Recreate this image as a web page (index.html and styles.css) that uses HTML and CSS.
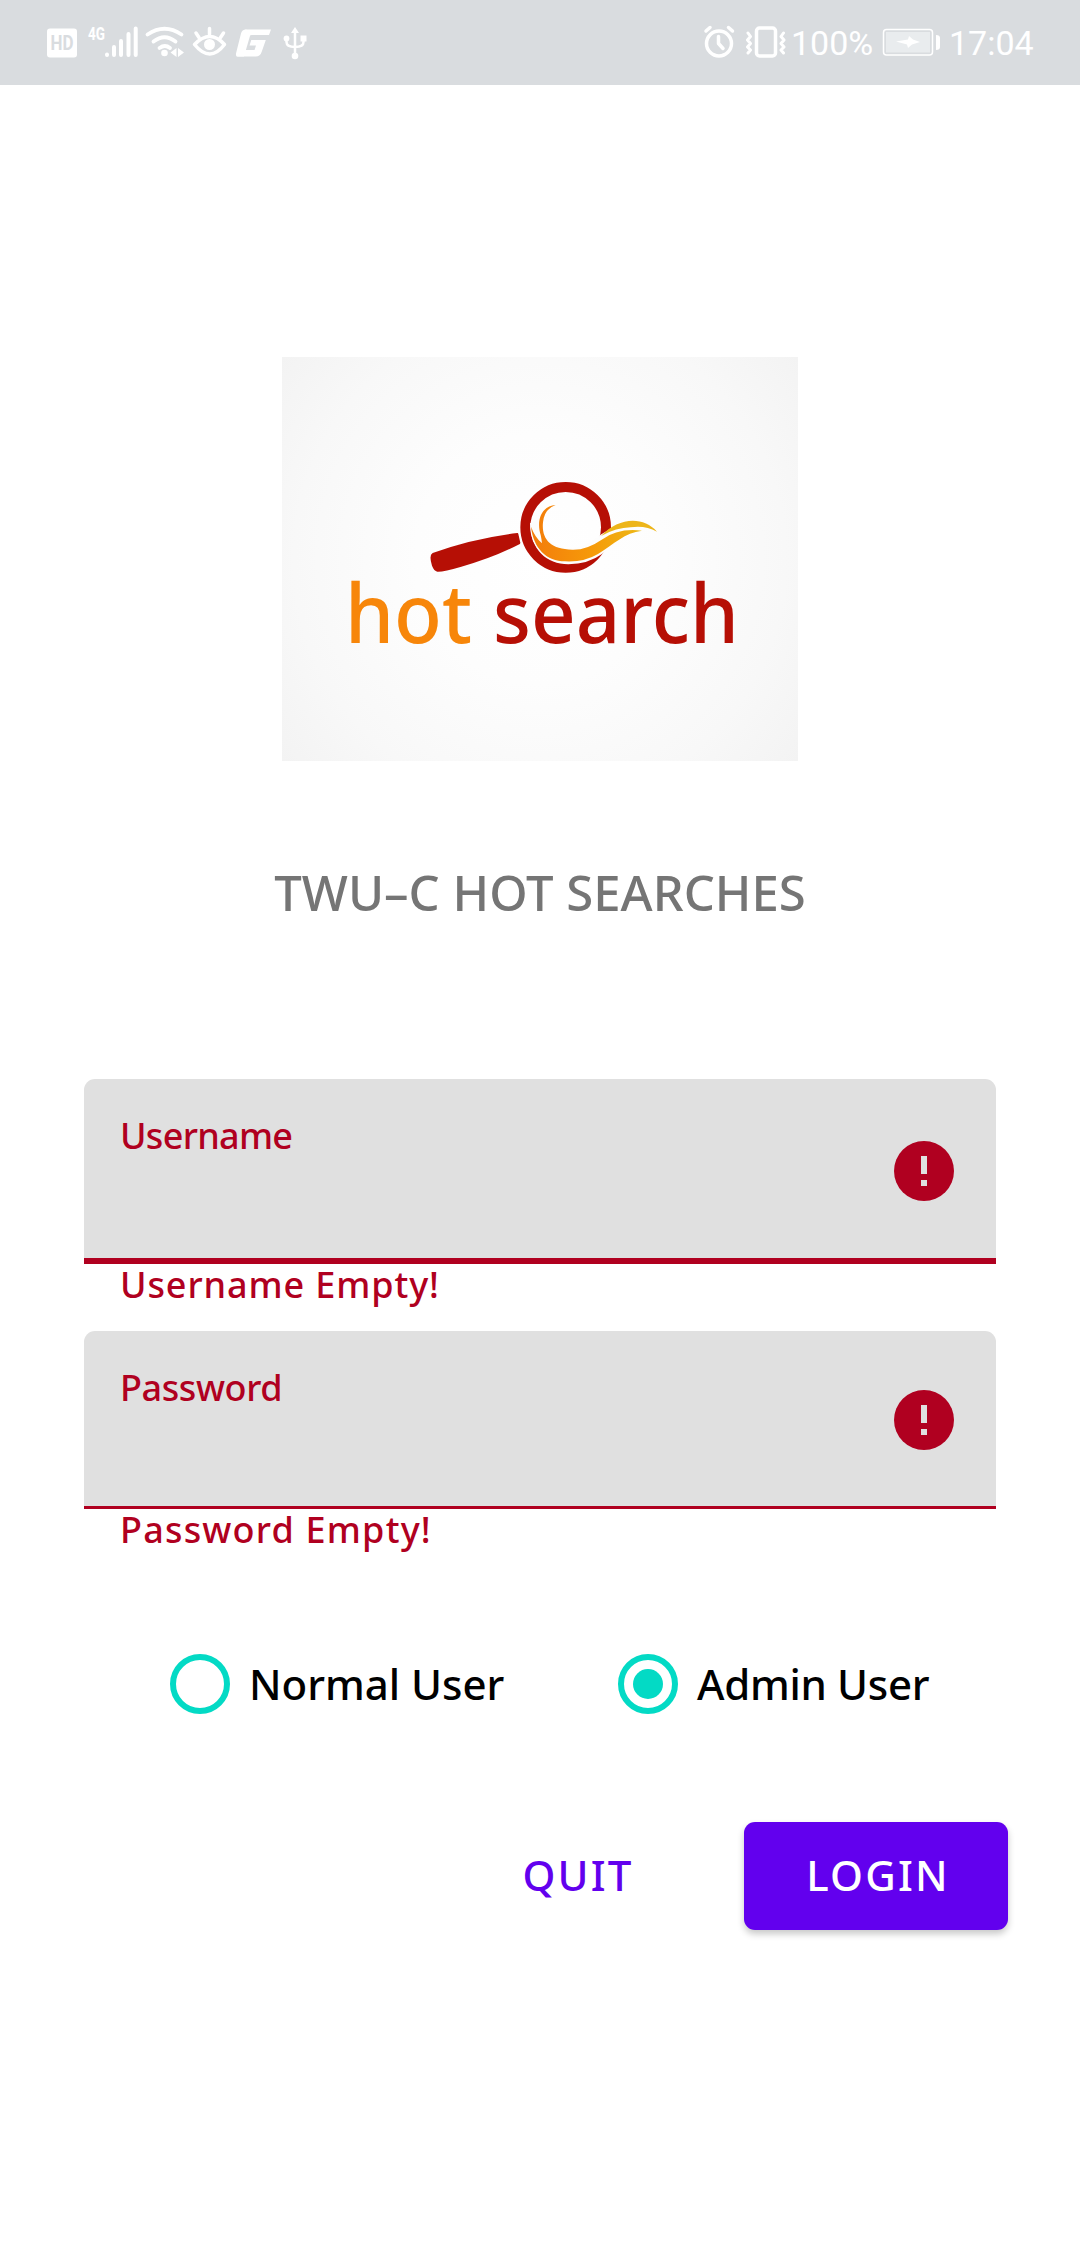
FILE: index.html
```
<!DOCTYPE html>
<html lang="en">
<head>
<meta charset="utf-8">
<title>TWU-C Hot Searches</title>
<link rel="stylesheet" href="styles.css">
</head>
<body>
<header class="status">
  <svg class="status-left" viewBox="0 0 300 85" fill="none" stroke="#fff">
    <rect x="17" y="28.500" width="30" height="29" rx="3" fill="#fff" stroke="none"/>
    <text class="hd" x="20.500" y="50" textLength="23" lengthAdjust="spacingAndGlyphs">HD</text>
    <text class="net" x="58" y="40" textLength="17" lengthAdjust="spacingAndGlyphs">4G</text>
    <path stroke-width="4" stroke-linecap="round" d="M77 54.500v.5M84 47v8M91 41v14M98.500 34v21M105.700 28.500v26.500"/>
    <g transform="translate(30 0)">
      <path stroke-width="3.800" stroke-linecap="round" d="M87.500 34.500q17-11.500 34 0M93.500 41.500q11-8.500 22 0M99.500 48q5.500-4 10.500 0"/>
      <circle cx="104.500" cy="53" r="3.300" fill="#fff" stroke="none"/>
      <path fill="#fff" stroke="none" d="M116.500 48v9l-6-4.500zM118 48v9l6-4.500z"/>
      <path stroke-width="3.500" stroke-linecap="round" stroke-linejoin="round" d="M134.500 44.500q15.500-16 30 0q-14.500 19-30 0zM149.500 28.500v6M136 33l3 4.500M163.500 33l-3 4.500"/>
      <circle cx="149.500" cy="44.500" r="5.500" fill="#fff" stroke="none"/>
      <path stroke="none" fill="#fff" d="M186 29.500h25l-2 5.500h-17q-3.500 0-5 4l-2.500 8q-1 3 2 3h8l1.500-4.500h-6.500l1.800-5.500h14.500l-4 11.500q-1.500 5-6 5h-19.300q0-.5.500-2l5-19q1.500-6 4-6z"/>
      <path stroke="none" fill="#fff" d="M186 29.500q-4 0-5 4l-5 20q-.5 3 2 3h6l7-24z"/>
      <path stroke-width="2.500" d="M235 31v24M226.500 39v3q0 5 8.500 5q8.500 0 8.500-5v-3"/>
      <path stroke="none" fill="#fff" d="M235 27l4 6h-8z"/>
      <circle cx="226.500" cy="38.500" r="2.900" fill="#fff" stroke="none"/>
      <path fill="#fff" stroke="none" d="M240.500 35.500h6v6h-6z"/>
      <circle cx="235" cy="56" r="3.300" fill="#fff" stroke="none"/>
    </g>
  </svg>
  <div class="status-right">
    <svg class="alerts" viewBox="700 0 90 85" fill="none" stroke="#fff" stroke-width="3.500" stroke-linecap="round" stroke-linejoin="round">
      <circle cx="719" cy="43.500" r="12.500"/><path d="M718.500 36.500v7l4.500 5M706 31l4-3.500M732.500 31l-4-3.500"/>
      <rect x="756.500" y="28" width="19" height="28" rx="3"/>
      <path stroke-width="3" d="M748 33l2.500 3.500-3 3.500 3 3.500-3 3.500 3 3-2.500 3M783.500 33l-2.500 3.500 3 3.500-3 3.500 3 3.500-3 3 2.500 3"/>
    </svg>
    <span class="level">100%</span>
    <svg class="battery" viewBox="880 0 62 85">
      <rect x="883.500" y="29.500" width="49" height="25.500" rx="3" fill="none" stroke="#fff" stroke-width="1.500"/>
      <rect x="886" y="32" width="44" height="20.500" fill="#e9ecee"/>
      <path fill="#fff" d="M896 41.500l12-2 1-3.500 4 3.500 7 2.500-8 2.500-4 3.500-1-3.500zM936 35q4 0 4 3v9q0 3-4 3z"/>
    </svg>
    <span class="clock">17:04</span>
  </div>
</header>
<main class="screen">
  <svg class="logo" viewBox="282 357 516 404" role="img" aria-label="hot search">
    <defs>
      <linearGradient id="flame" x1="0" x2="1"><stop offset="0" stop-color="#f37c0b"/><stop offset=".55" stop-color="#f69a09"/><stop offset="1" stop-color="#edb916"/></linearGradient>
    </defs>
    <g transform="translate(400 460) scale(.33333)">
      <path fill="#b60f05" d="M98 279Q220 235 352 219Q354 218 355 222L361 248Q362 252 355 254Q280 293 184 320Q130 336 112 335Q102 333 96 317Q86 285 98 279Z"/>
      <circle cx="497" cy="202" r="121" fill="none" stroke="#b60f05" stroke-width="30"/>
      <path fill="#fdfdfd" d="M390 190C392 270 440 313 505 313Q565 312 606 282L645 250V199L604 223Q558 265 500 265Q420 248 420 175Z"/>
      <path fill="url(#flame)" d="M467 135C425 138 408 180 422 225Q425 239 426 250Q405 232 393 200C400 265 440 304 495 304Q552 307 594 282C642 252 674 218 726 212Q655 203 605 239Q562 269 520 269C450 270 424 236 429 187Q433 147 467 135Z"/>
      <path fill="#edb51a" d="M603 228C656 171 730 168 771 215Q735 195 692 202Q649 203 603 228Z"/>
    </g>
    <text class="word hot" x="345" y="643" textLength="127" lengthAdjust="spacingAndGlyphs">hot</text>
    <text class="word search" x="493" y="643" textLength="246" lengthAdjust="spacingAndGlyphs">search</text>
  </svg>
  <h1 class="title">TWU–C HOT SEARCHES</h1>
  <form class="form">
    <div class="field active">
      <label class="label user-label">Username</label>
      <svg class="error" viewBox="0 0 60 60"><circle cx="30" cy="30" r="30" fill="#b00020"/><path fill="#e0e0e0" d="M27 15h6v18h-6zM27 39h6v6h-6z"/></svg>
    </div>
    <p class="helper">Username Empty!</p>
    <div class="field second">
      <label class="label pass-label">Password</label>
      <svg class="error" viewBox="0 0 60 60"><circle cx="30" cy="30" r="30" fill="#b00020"/><path fill="#e0e0e0" d="M27 15h6v18h-6zM27 39h6v6h-6z"/></svg>
    </div>
    <p class="helper pass-helper">Password Empty!</p>
    <div class="roles">
      <label class="role"><span class="radio"></span><span class="role-name">Normal User</span></label>
      <label class="role"><span class="radio checked"></span><span class="role-name admin">Admin User</span></label>
    </div>
    <div class="actions">
      <button type="button" class="btn quit">QUIT</button>
      <button type="button" class="btn login">LOGIN</button>
    </div>
  </form>
</main>
</body>
</html>
```
FILE: styles.css
```
* { box-sizing: border-box; }
body { margin: 0; width: 1080px; min-height: 2244px; background: #fff; font-family: "Noto Sans", sans-serif; }
.status { display: flex; justify-content: space-between; height: 85px; padding: 0 0 0 30px; background: #d9dcdf; color: #fff; font-family: Roboto, sans-serif; font-size: 34px; line-height: 87px; }
.status-left { width: 300px; height: 85px; }
.hd { font: 700 21px Roboto, sans-serif; fill: #d9dcdf; stroke: none; }
.net { font: 700 18px Roboto, sans-serif; fill: #fff; stroke: none; }
.status-right { display: flex; width: 380px; }
.alerts { width: 90px; height: 85px; }
.level { width: 90px; padding-left: 1px; }
.battery { width: 62px; height: 85px; }
.clock { padding-left: 7px; }
.screen { display: flex; flex-direction: column; }
.logo { width: 516px; height: 404px; margin: 272px 0 0 282px; background: radial-gradient(circle, #fff 0, #fdfdfd 38%, #f8f8f8 75%, #f3f3f3 100%); }
.word { font: 500 82px "Noto Sans", sans-serif; }
.hot { fill: #f7860a; }
.search { fill: #b60f05; }
.title { margin: 96px 0 0; font-size: 49px; line-height: 70px; font-weight: 500; text-align: center; color: #757575; white-space: nowrap; }
.form { margin-top: 152px; }
.field { display: flex; justify-content: space-between; width: 912px; height: 185px; margin-left: 84px; padding: 37px 42px 0 36px; background: #e0e0e0; border-bottom: 6px solid #b00020; border-radius: 11px 11px 0 0; }
.second { height: 178px; margin-top: 26px; border-bottom-width: 3px; }
.label { font-size: 36px; line-height: 40px; font-weight: 500; color: #b00020; }
.user-label { letter-spacing: -0.7px; }
.pass-label { letter-spacing: -0.4px; }
.error { width: 60px; height: 60px; margin-top: 25px; }
.second .error { margin-top: 22px; }
.helper { margin: 0 0 0 120px; padding-top: 1px; font-size: 36px; line-height: 40px; font-weight: 500; color: #b00020; letter-spacing: 0.9px; white-space: nowrap; }
.pass-helper { letter-spacing: 1.2px; }
.roles { display: grid; grid-template-columns: 448px 400px; height: 60px; margin: 104px 0 0 170px; }
.role { display: flex; align-items: center; gap: 19px; font-size: 42px; line-height: 58px; font-weight: 500; color: #000; white-space: nowrap; }
.admin { letter-spacing: -0.3px; }
.radio { flex: none; display: grid; place-items: center; width: 60px; height: 60px; border: 6px solid #03dac5; border-radius: 50%; }
.checked::before { content: ""; width: 30px; height: 30px; border-radius: 50%; background: #03dac5; }
.actions { display: flex; justify-content: flex-end; gap: 34px; height: 108px; margin: 108px 72px 0 0; }
.btn { border: 0; padding: 0 0 3px 4px; font: 500 42px "Noto Sans", sans-serif; border-radius: 11px; letter-spacing: 2.2px; background: none; color: #6200ee; white-space: nowrap; }
.quit { width: 264px; padding-left: 0; }
.login { width: 264px; background: #6200ee; color: #fff; box-shadow: 0 4px 7px rgba(0,0,0,.22); }
```
